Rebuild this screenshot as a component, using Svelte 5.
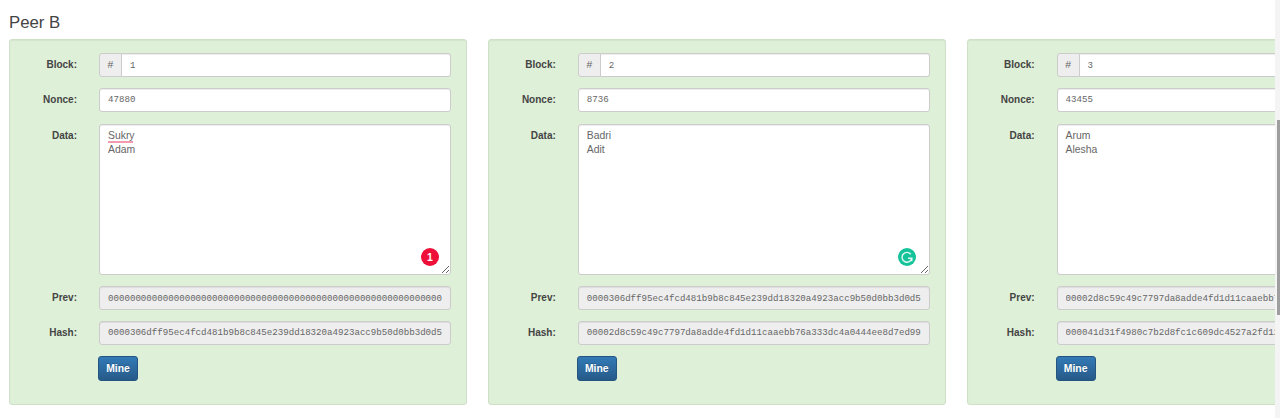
<script>
  const blocks = [
    {
      number: 1,
      nonce: "47880",
      data: "Sukry\nAdam",
      prev: "0000000000000000000000000000000000000000000000000000000000000000",
      hash: "0000306dff95ec4fcd481b9b8c845e239dd18320a4923acc9b50d0bb3d0d5e12",
      badge: "count",
    },
    {
      number: 2,
      nonce: "8736",
      data: "Badri\nAdit",
      prev: "0000306dff95ec4fcd481b9b8c845e239dd18320a4923acc9b50d0bb3d0d5e12",
      hash: "00002d8c59c49c7797da8adde4fd1d11caaebb76a333dc4a0444ee8d7ed99a01",
      badge: "grammarly",
    },
    {
      number: 3,
      nonce: "43455",
      data: "Arum\nAlesha",
      prev: "00002d8c59c49c7797da8adde4fd1d11caaebb76a333dc4a0444ee8d7ed99a01",
      hash: "000041d31f4980c7b2d8fc1c609dc4527a2fd12e6a3b90c1d47f58e2b7c03d16",
      badge: null,
    },
  ];
</script>

<div class="page">
  <h3>Peer B</h3>

  <div class="peer-row">
    {#each blocks as block}
      <div class="well">
        <div class="form-row">
          <span class="label">Block:</span>
          <div class="input-group">
            <span class="addon">#</span>
            <input class="control mono" type="text" value={block.number} spellcheck="false" />
          </div>
        </div>

        <div class="form-row">
          <span class="label">Nonce:</span>
          <input class="control mono" type="text" value={block.nonce} spellcheck="false" />
        </div>

        <div class="form-row data-row">
          <span class="label">Data:</span>
          <div class="data-wrap">
            <textarea class="control data" spellcheck="false">{block.data}</textarea>
            {#if block.number === 1}
              <span class="spell-mark"></span>
            {/if}
            {#if block.badge === "count"}
              <span class="badge count">1</span>
            {:else if block.badge === "grammarly"}
              <span class="badge grammarly">
                <svg viewBox="0 0 18 18" width="18" height="18" aria-hidden="true">
                  <path d="M12.8 6.2A4.9 4.9 0 1 0 13.8 10.2H10" fill="none" stroke="#fff" stroke-opacity="0.85" stroke-width="1.4" />
                  <path d="M13.8 13.2V10.2" fill="none" stroke="#fff" stroke-opacity="0.85" stroke-width="1.4" />
                </svg>
              </span>
            {/if}
          </div>
        </div>

        <div class="form-row">
          <span class="label">Prev:</span>
          <input class="control mono" type="text" value={block.prev} disabled />
        </div>

        <div class="form-row">
          <span class="label">Hash:</span>
          <input class="control mono" type="text" value={block.hash} disabled />
        </div>

        <div class="form-row">
          <span class="label"></span>
          <button class="mine" type="button">Mine</button>
        </div>
      </div>
    {/each}
  </div>

  <div class="scrollbar"><div class="thumb"></div></div>
</div>

<style>
  :global(body) {
    margin: 0;
    background: #ffffff;
    font-family: "Liberation Sans", Arial, sans-serif;
    color: #333333;
  }

  .page {
    position: relative;
    height: 418px;
    overflow: hidden;
    box-sizing: border-box;
    padding: 14px 0 0 9px;
  }

  h3 {
    margin: 0 0 7px;
    font-size: 16.8px;
    font-weight: 400;
    line-height: 18px;
    color: #444444;
  }

  .peer-row {
    display: flex;
    gap: 20.8px;
    width: 1600px;
  }

  .well {
    width: 458px;
    height: 366px;
    box-sizing: border-box;
    padding: 13.4px 15px 0 0;
    background: #dff0d8;
    border: 1px solid #cfdfc8;
    border-radius: 3px;
    box-shadow: inset 0 1px 1px rgba(0, 0, 0, 0.05);
    display: flex;
    flex-direction: column;
    gap: 11.1px;
  }

  .form-row {
    display: flex;
    align-items: flex-start;
    gap: 21px;
  }

  .data-row {
    margin-top: 1px;
  }

  .label {
    width: 67px;
    margin-right: 1px;
    flex: none;
    padding-top: 5px;
    text-align: right;
    font-size: 10px;
    line-height: 13px;
    font-weight: 700;
    color: #444444;
  }

  .control {
    display: block;
    flex: 1;
    min-width: 0;
    width: 100%;
    height: 23.6px;
    box-sizing: border-box;
    margin: 0;
    padding: 0 8px;
    background: #ffffff;
    border: 1px solid #cccccc;
    border-radius: 3px;
    box-shadow: inset 0 1px 1px rgba(0, 0, 0, 0.075);
    font-size: 9.15px;
    color: #666666;
    outline: none;
  }

  .mono {
    font-family: "Liberation Mono", "DejaVu Sans Mono", monospace;
  }

  .control:disabled {
    background: #eeeeee;
    color: #666666;
    -webkit-text-fill-color: #666666;
    opacity: 1;
  }

  .input-group {
    flex: 1;
    display: flex;
    min-width: 0;
  }

  .addon {
    width: 23px;
    height: 23.6px;
    flex: none;
    box-sizing: border-box;
    display: flex;
    align-items: center;
    justify-content: center;
    background: #eeeeee;
    border: 1px solid #cccccc;
    border-radius: 3px 0 0 3px;
    font-family: "Liberation Mono", monospace;
    font-size: 10.5px;
    color: #666666;
  }

  .input-group .control {
    border-left: 0;
    border-radius: 0 3px 3px 0;
  }

  .data-wrap {
    position: relative;
    flex: 1;
    min-width: 0;
    height: 151.5px;
  }

  .data {
    height: 151.5px;
    padding: 4px 8px;
    font-family: "Liberation Sans", Arial, sans-serif;
    font-size: 10.4px;
    line-height: 14px;
  }

  .spell-mark {
    position: absolute;
    left: 9px;
    top: 17px;
    width: 25px;
    height: 2px;
    background: #f29bb0;
  }

  .badge {
    position: absolute;
    left: 322px;
    top: 124px;
    width: 18px;
    height: 18px;
    border-radius: 50%;
    display: flex;
    align-items: center;
    justify-content: center;
  }

  .badge.count {
    background: #ee1039;
    color: #ffffff;
    font-size: 10.5px;
    font-weight: 700;
  }

  .badge.grammarly {
    left: 320px;
    background: #15c39a;
  }

  .mine {
    width: 40px;
    height: 25px;
    margin: 0 0 0 -1px;
    padding: 0;
    border: 1px solid #245580;
    border-radius: 3px;
    background: linear-gradient(#337ab7, #265a88);
    color: #ffffff;
    font-family: "Liberation Sans", Arial, sans-serif;
    font-size: 10.4px;
    font-weight: 700;
    text-shadow: 0 -1px 0 rgba(0, 0, 0, 0.2);
  }

  .scrollbar {
    position: absolute;
    top: 0;
    right: 0;
    bottom: 0;
    width: 5px;
    background: #f4f4f4;
  }

  .thumb {
    position: absolute;
    top: 120px;
    right: 0;
    width: 3px;
    height: 195px;
    background: #9e9e9e;
  }
</style>
